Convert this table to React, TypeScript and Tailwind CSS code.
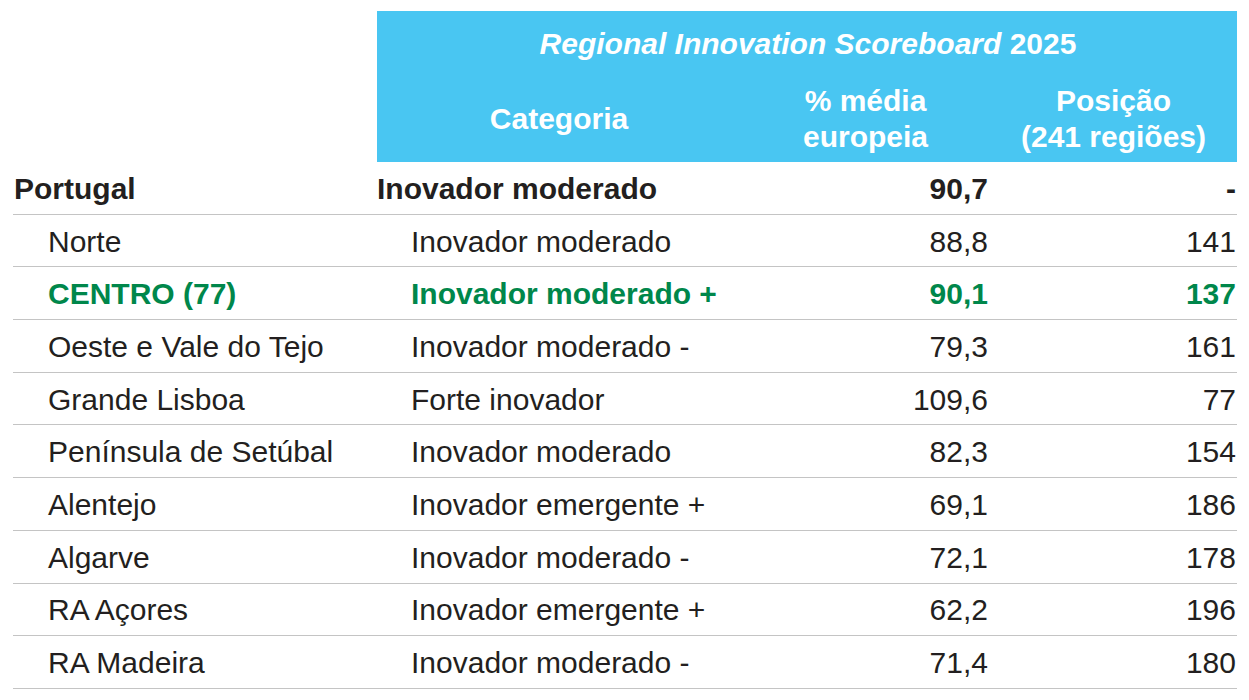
import React from "react";

type Row = { name: string; cat: string; pct: string; pos: string; kind?: "total" | "hl" };

const rows: Row[] = [
  { name: "Portugal", cat: "Inovador moderado", pct: "90,7", pos: "-", kind: "total" },
  { name: "Norte", cat: "Inovador moderado", pct: "88,8", pos: "141" },
  { name: "CENTRO (77)", cat: "Inovador moderado +", pct: "90,1", pos: "137", kind: "hl" },
  { name: "Oeste e Vale do Tejo", cat: "Inovador moderado -", pct: "79,3", pos: "161" },
  { name: "Grande Lisboa", cat: "Forte inovador", pct: "109,6", pos: "77" },
  { name: "Península de Setúbal", cat: "Inovador moderado", pct: "82,3", pos: "154" },
  { name: "Alentejo", cat: "Inovador emergente +", pct: "69,1", pos: "186" },
  { name: "Algarve", cat: "Inovador moderado -", pct: "72,1", pos: "178" },
  { name: "RA Açores", cat: "Inovador emergente +", pct: "62,2", pos: "196" },
  { name: "RA Madeira", cat: "Inovador moderado -", pct: "71,4", pos: "180" },
];

export default function App() {
  return (
    <div
      className="w-[1249px] h-[700px] bg-white pt-[11px] pl-[13px] text-[#231f20]"
      style={{ fontFamily: '"Liberation Sans", Arial, sans-serif' }}
    >
      <div className="grid grid-cols-[364px_364px_249px_247px]">
        <div className="row-span-2" />
        <div className="col-span-3 bg-[#49c6f2] h-[64px] flex items-center justify-center text-white font-bold text-[30px] pl-[2px]">
          <span>
            <i>Regional Innovation Scoreboard</i> 2025
          </span>
        </div>
        <div className="bg-[#49c6f2] h-[87px] flex items-center justify-center text-white font-bold text-[30px]">
          Categoria
        </div>
        <div className="bg-[#49c6f2] h-[87px] flex items-center justify-center text-center text-white font-bold text-[30px] leading-[36px]">
          <span>
            % média
            <br />
            europeia
          </span>
        </div>
        <div className="bg-[#49c6f2] h-[87px] flex items-center justify-center text-center text-white font-bold text-[30px] leading-[36px]">
          <span>
            Posição
            <br />
            (241 regiões)
          </span>
        </div>
      </div>
      <div className="w-[1224px]">
        {rows.map((r) => {
          const bold = r.kind === "total" || r.kind === "hl";
          const color = r.kind === "hl" ? "text-[#00874b]" : "text-[#231f20]";
          return (
            <div
              key={r.name}
              className={`grid grid-cols-[364px_364px_249px_247px] h-[52.7px] pt-[2px] items-center border-b border-[#c4c4c4] text-[30px] leading-[36px] ${color} ${bold ? "font-bold" : ""}`}
            >
              <div className={r.kind === "total" ? "pl-[1px]" : "pl-[35px]"}>{r.name}</div>
              <div className={r.kind === "total" ? "pl-0" : "pl-[34px]"}>{r.cat}</div>
              <div className="text-right pr-[2px]">{r.pct}</div>
              <div className="text-right pr-[1px]">{r.pos}</div>
            </div>
          );
        })}
      </div>
    </div>
  );
}
